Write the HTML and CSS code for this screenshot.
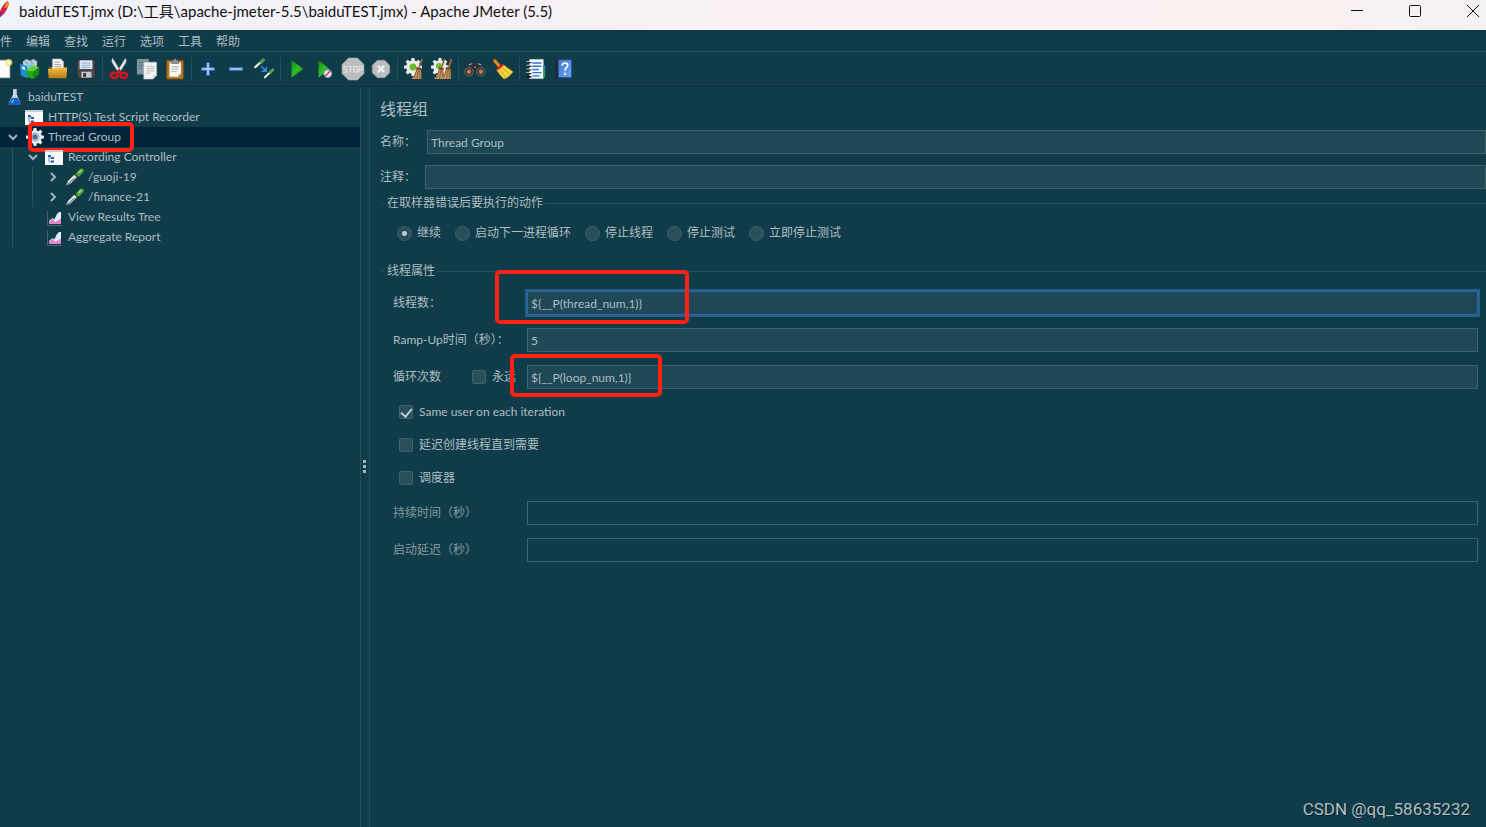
FILE: index.html
```html
<!DOCTYPE html>
<html lang="zh-CN">
<head>
<meta charset="utf-8">
<title>baiduTEST.jmx - Apache JMeter (5.5)</title>
<link rel="stylesheet" href="styles.css">
</head>
<body>
<svg class="defs" width="0" height="0" aria-hidden="true">
  <defs>
    <linearGradient id="g-green" x1="0" y1="0" x2="1" y2="1"><stop offset="0" stop-color="#0a8a0a"/><stop offset=".5" stop-color="#2fc02a"/><stop offset="1" stop-color="#087a08"/></linearGradient>
    <linearGradient id="g-gold" x1="0" y1="0" x2="0" y2="1"><stop offset="0" stop-color="#f4c04a"/><stop offset="1" stop-color="#b67b0c"/></linearGradient>
    <linearGradient id="g-book" x1="0" y1="0" x2="1" y2="1"><stop offset="0" stop-color="#3f78d0"/><stop offset="1" stop-color="#6ba5f0"/></linearGradient>
    <symbol id="gear" viewBox="0 0 20 20"><path fill="#e8ecee" d="M8.6 1h2.8l.4 2.6 1.5.6 2.1-1.5 2 2-1.5 2.1.6 1.5 2.5.4v2.7l-2.5.4-.6 1.5 1.5 2.1-2 2-2.1-1.5-1.5.6-.4 2.5H8.6l-.4-2.5-1.500-.6-2.100 1.500-2-2 1.500-2.100-.6-1.500L1 11.400V8.700l2.500-.4.6-1.500-1.500-2.100 2-2 2.100 1.500 1.500-.6z"/></symbol>
    <symbol id="pipette" viewBox="0 0 20 20"><path d="M1.500 18 3 14l7-7 2.500 2.500-7 7z" fill="#e6ecee" stroke="#7b898d" stroke-width=".6"/><path d="M3 17.200 9.500 11" stroke="#2a383e" stroke-width=".9"/><path d="m9 6 5 5" stroke="#173b1c" stroke-width="1.800"/><path d="m10.500 7 4-4.500q2-1.900 3.700-.4 1.500 1.700-.4 3.600L13.300 10z" fill="#4fa43c"/><path d="m13.500 6 3-3" stroke="#a5dd8d" stroke-width="1.300"/><path d="M4 19h10" stroke="#0b2c36" stroke-width="1"/></symbol>
    <symbol id="window" viewBox="0 0 20 20"><path fill="#f6f8fa" d="M0 3h18v15H0z"/><path fill="#c7ced6" d="M0 3h18v2H0z"/><path d="M4 9v6M4 11h4M4 15h4" stroke="#7b94b3" fill="none"/><path fill="#1f62b5" d="M3 8h3v2H3zM6 10h3v2H6zM6 13.500h3v2H6z"/></symbol>
    <symbol id="chart" viewBox="0 0 20 20"><path d="M2.500 4v14.500H17" stroke="#4c5d78" fill="none"/><path fill="#d9ecfa" d="m4 17 5-4 3-6 2-2h2v12z"/><path fill="#e485cf" d="M4 17v-2l3.500-3 3 2.500 5.500-3V17z"/><path d="m4 14.500 3.500-3 3 2.500 4-3 1-5" stroke="#f7fbff" fill="none"/></symbol>
    <symbol id="broom" viewBox="0 0 12 22"><path d="m10.500 1-3 9" stroke="#a06b3c" stroke-width="1.800"/><path d="M5 9l4.500 1 .5 11H0q4-4 5-12z" fill="#c79660"/><path d="m5.500 11-3 9M7 11l-1.500 10M8 11l.5 10" stroke="#835429" stroke-width=".8"/><path d="m4.800 10 5 1" stroke="#6c401b" stroke-width="1.400"/></symbol>
  </defs>
</svg>

<div class="app">
  <header class="titlebar">
    <svg class="feather" viewBox="0 0 10 20" aria-hidden="true"><path d="M7.500 1q2.500 2-.5 8T1 16L0 11Q3 4 7.500 1z" fill="#d2224a"/><path d="M7.500 1q2.500 2 0 6L4 8q1-4 3.500-7z" fill="#f08a24"/><path d="M1 12 0 17" stroke="#6d2a78" stroke-width="1.500"/></svg>
    <h1 class="window-title">baiduTEST.jmx (D:\工具\apache-jmeter-5.5\baiduTEST.jmx) - Apache JMeter (5.5)</h1>
    <div class="window-controls">
      <button type="button" aria-label="最小化"><svg viewBox="0 0 14 14"><path d="M1 6.500h12"/></svg></button>
      <button type="button" aria-label="最大化"><svg viewBox="0 0 14 14"><rect x="1.500" y="1.500" width="11" height="11" rx="1"/></svg></button>
      <button type="button" aria-label="关闭"><svg viewBox="0 0 14 14"><path d="m1 1 12 12M13 1 1 13"/></svg></button>
    </div>
  </header>

  <nav class="menubar">
    <button type="button">件</button><button type="button">编辑</button><button type="button">查找</button><button type="button">运行</button><button type="button">选项</button><button type="button">工具</button><button type="button">帮助</button>
  </nav>

  <div class="toolbar" role="toolbar">
    <button type="button" aria-label="新建"><svg viewBox="0 0 24 24"><path fill="#fafafa" stroke="#c9c9c9" d="M2.500 2.500h18v19h-18z"/><circle cx="19.500" cy="5" r="3.800" fill="#f3e768" opacity=".8"/><circle cx="19.500" cy="5" r="1.800" fill="#fffde0"/></svg></button>
    <button type="button" aria-label="模板"><svg viewBox="0 0 24 24"><path fill="#b9cdd6" d="m4 4 4-3 4 2 4-2 4 3-1 7H5z"/><path d="m7 3 2 4M13 3l2 4" stroke="#6f8c99"/><path fill="#1b8fd1" d="m1 6 8 3v13l-7-3z"/><path fill="#66c5ee" d="m9 9 5-3v8l-5 7z"/><path fill="#fff" d="m3.500 9 3 1v3l-3-1z"/><path fill="#24a51d" d="m8 13 8 2v8l-7-2z"/><path fill="#61d43c" d="m8 13 7-5 7 2-6 5z"/><path fill="#168a14" d="m16 15 6-5v8l-6 5z"/></svg></button>
    <button type="button" aria-label="打开"><svg viewBox="0 0 24 24"><path fill="#a06c10" d="M2 10h19v11H2z"/><path fill="#f3f3f3" stroke="#b5b5b5" stroke-width=".6" d="M6 1h9l3 3v8H6z"/><path d="M8 4.500h6M8 7h8M8 9.500h8" stroke="#9a9a9a"/><path fill="url(#g-gold)" d="M2 22 1 12h6l2-1.500h13L21 22z"/></svg></button>
    <button type="button" aria-label="保存"><svg viewBox="0 0 24 24"><path fill="#46484c" stroke="#25272b" d="M2 2h20v20H4.500L2 19.500z"/><path fill="#dce8f7" d="M5 2.500h14V12H5z"/><path d="M7 5.500h10M7 8h10M7 10.300h10" stroke="#89a9d1"/><path fill="#c4c6c9" d="M7 15h11v6.500H7z"/><path fill="#2a2c30" d="M9 16.500h3v4H9z"/></svg></button>
    <span class="separator"></span>
    <button type="button" aria-label="剪切"><svg viewBox="0 0 24 24"><path fill="#e6e8ea" stroke="#8d9396" stroke-width=".5" d="M5 0q-2 3 0 6l6.500 10 2-2zM19 0q2 3 0 6l-6.500 10-2-2z"/><g fill="none" stroke="#d4131c" stroke-width="2.800"><ellipse cx="6.800" cy="19" rx="3.600" ry="2.900"/><ellipse cx="17.200" cy="19" rx="3.600" ry="2.900"/></g><path d="m9.500 16.500 4-3.500M14.500 16.500l-3.500-3.500" stroke="#d4131c" stroke-width="2"/></svg></button>
    <button type="button" aria-label="复制"><svg viewBox="0 0 24 24"><path fill="#7f949c" d="M1 1h13v17H1z"/><path d="M3 5h8M3 8h6M3 11h4" stroke="#5b737c"/><path fill="#f4f5f5" stroke="#b1b8ba" stroke-width=".7" d="M8.500 4.500h14V19l-4 4h-10z"/><path d="M11 9h9M11 11.500h9M11 14h9M11 16.500h5" stroke="#b0b6b8"/><path fill="#c6cccd" d="M18.500 23v-4h4z"/></svg></button>
    <button type="button" aria-label="粘贴"><svg viewBox="0 0 24 24"><rect x="3" y="2.500" width="18" height="20.500" rx="1" fill="#b87a26" stroke="#7c4d10"/><path fill="#f7f7f7" d="M6 5h12.500v12l-3 3.500H6z"/><path fill="#c6c9ca" d="M15.500 20.500V17h3z"/><path d="M8 9.500h8M8 12h8M8 14.500h6" stroke="#a8adaf"/><path fill="#8f979a" stroke="#50585b" stroke-width=".6" d="M8 6V3h2l1-2h2l1 2h2v3z"/></svg></button>
    <span class="separator"></span>
    <button type="button" aria-label="全部展开"><svg viewBox="0 0 24 24"><path d="M12 4.500v15M4.500 12h15" stroke="#3878c4" stroke-width="4"/><path d="M12 5.500v13M5.500 12h13" stroke="#b9dbff" stroke-width="1.600"/></svg></button>
    <button type="button" aria-label="全部折叠"><svg viewBox="0 0 24 24"><path d="M4.500 12h15" stroke="#3878c4" stroke-width="4"/><path d="M5.500 12h13" stroke="#b9dbff" stroke-width="1.600"/></svg></button>
    <button type="button" aria-label="切换"><svg viewBox="0 0 24 24"><g stroke-linecap="round"><path d="m2.500 10 7-6.500M13 21l7-6.500" stroke="#e2eadf" stroke-width="2.400"/><path d="m9 4.500 2.500-2.500M19 15.500l2.500-2.500" stroke="#4fa642" stroke-width="3.200"/></g><path d="m9 9 5 5M14.500 9.500v5h-5" fill="none" stroke="#3b8ae6" stroke-width="1.600"/></svg></button>
    <span class="separator"></span>
    <button type="button" aria-label="启动"><svg viewBox="0 0 24 24"><path d="M6 2.500v19L19 12z" fill="url(#g-green)"/></svg></button>
    <button type="button" aria-label="不停顿开始"><svg viewBox="0 0 24 24"><path d="M5 2.500v19L17 12z" fill="url(#g-green)"/><circle cx="15" cy="17" r="4.300" fill="#e4edf6" stroke="#6f9bc7"/><path d="m12 20 6-6" stroke="#e03434" stroke-width="1.500"/></svg></button>
    <button type="button" class="wide-icon" aria-label="停止"><svg viewBox="0 0 24 24"><path fill="#bcbebf" stroke="#a2a5a6" stroke-width=".6" d="M7.500 1h9L23 7.500v9L16.500 23h-9L1 16.500v-9z"/><path d="M6.500 9.500H3v2.500h3v3H2.700M7.500 9.500h4M9.500 9.500V15.500M12.700 9.500h3.300V15h-3.300zM18 15.500v-6h3V13h-3" fill="none" stroke="#e4e5e5" stroke-width="1.100"/></svg></button>
    <button type="button" aria-label="关闭"><svg viewBox="0 0 24 24"><path fill="#bbbdbf" stroke="#9da1a3" stroke-width=".6" d="M8 2.500h8L21.500 8v8L16 21.500H8L2.500 16V8z"/><path d="m8.500 8.500 7 7m0-7-7 7" stroke="#f1f1f1" stroke-width="2.500"/></svg></button>
    <span class="separator"></span>
    <button type="button" class="wide-icon" aria-label="清除"><svg viewBox="0 0 24 24"><use href="#gear" x="1" y="0" width="20" height="20"/><circle cx="11" cy="10" r="3.500" fill="#72b92e"/><use href="#broom" x="9" y="1" width="13" height="22"/></svg></button>
    <button type="button" class="wide-icon" aria-label="清除全部"><svg viewBox="0 0 24 24"><use href="#gear" x="0" y="0" width="20" height="20"/><circle cx="9" cy="9" r="3" fill="#72b92e"/><use href="#broom" x="4" y="1" width="12" height="22"/><use href="#broom" x="11" y="1" width="12" height="22"/></svg></button>
    <span class="separator"></span>
    <button type="button" aria-label="查找"><svg viewBox="0 0 24 24"><path fill="#2b2d30" d="M1 14 5 6l4-2 3 3 3-3 4 2 4 8-3 6-5-3h-4l-5 3z"/><path d="m5 8 4-2M15 6l4 2M11 10h2" stroke="#a5a9ac" stroke-width="1.200"/><circle cx="5.500" cy="15" r="4.500" fill="#222428" stroke="#8d9295" stroke-width=".8"/><circle cx="18.500" cy="15" r="4.500" fill="#222428" stroke="#8d9295" stroke-width=".8"/><circle cx="5.500" cy="15" r="2.600" fill="#b77955"/><circle cx="18.500" cy="15" r="2.600" fill="#b77955"/></svg></button>
    <button type="button" aria-label="重置查找"><svg viewBox="0 0 24 24"><path d="m3 3 6 7" stroke="#b66a13" stroke-width="4" stroke-linecap="round"/><path d="m3 3 5 6" stroke="#efa638" stroke-width="1.600"/><path fill="#f2d341" stroke="#bd9511" stroke-width=".7" d="m5 13 7-6q5 4 11 8-4 6-10 8-5-5-8-10z"/><path d="m11 11 8 6M9 13l6 8" stroke="#c49c17" stroke-width=".8"/><path d="m5.500 12.500 7-5.500" stroke="#d31d18" stroke-width="2.500"/></svg></button>
    <span class="separator"></span>
    <button type="button" aria-label="函数助手"><svg viewBox="0 0 24 24"><path fill="#f8fafc" stroke="#c6cfd8" stroke-width=".5" d="M5 1.500h15v21H5z"/><path fill="#2c7ed4" d="M20 8h2v6h-2z"/><path fill="#38a538" d="M20 14h2v7h-2z"/><path d="M8 5.500h10M8 9h10M8 12.500h7M8 16h10M8 19.500h8" stroke="#2b76d8" stroke-width="1.500"/><path d="M2 5h5M2 9h5M2 13h5M2 17h5M2 20.500h5" stroke="#111" stroke-width="1.500"/><path d="M1.500 4h5M1.500 8h5M1.500 12h5M1.500 16h5" stroke="#fff" stroke-width=".8"/></svg></button>
    <button type="button" aria-label="帮助"><svg viewBox="0 0 24 24"><path fill="#17396f" d="M2 1h19v22H2z"/><path fill="#202b39" d="M2 1h4v22H2z"/><path fill="url(#g-book)" d="M6 2h14v19H6z"/><path d="M10 8.500q0-3 3-3t3 2.700q0 1.800-1.700 2.700-1.300.9-1.300 3.100M13 16v2.500" stroke="#fff" stroke-width="1.800" fill="none"/></svg></button>
  </div>

  <div class="workspace">
    <aside class="tree-pane">
      <ul class="tree" role="tree">
        <li role="treeitem">
          <div class="node root"><svg class="node-icon" viewBox="0 0 20 20"><path fill="#d9e6ef" d="M8 1h4v6l4 10q0 2-2 2H5q-2 0-2-2L8 7z" opacity=".85"/><path fill="#1260c4" d="m6.500 11h6.500l3 6.500q-.5 1.500-2 1.500H5q-1.500 0-2-1.500z"/><path d="m8.500 13-2 3.500" stroke="#7fc0ff" stroke-width="1.500"/><path d="M9 2v7" stroke="#fff"/></svg><span>baiduTEST</span></div>
        </li>
        <li role="treeitem">
          <div class="node level-1"><span class="toggle"></span><svg class="node-icon"><use href="#window"/></svg><span>HTTP(S) Test Script Recorder</span></div>
        </li>
        <li role="treeitem">
          <div class="node level-1 selected"><button type="button" class="toggle" aria-label="折叠"><svg viewBox="0 0 12 12"><path d="m2 4 4 4 4-4"/></svg></button><svg class="node-icon" viewBox="0 0 20 20"><use href="#gear"/><circle cx="10" cy="10" r="4.500" fill="#aab9cf"/><circle cx="10" cy="10" r="2.500" fill="#4d6f9f"/></svg><span>Thread Group</span><i class="mark mark-node"></i></div>
          <ul class="children guide-1">
            <li role="treeitem">
              <div class="node level-2"><button type="button" class="toggle" aria-label="折叠"><svg viewBox="0 0 12 12"><path d="m2 4 4 4 4-4"/></svg></button><svg class="node-icon"><use href="#window"/></svg><span>Recording Controller</span></div>
              <ul class="children guide-2">
                <li role="treeitem"><div class="node level-3"><button type="button" class="toggle" aria-label="展开"><svg viewBox="0 0 12 12"><path d="m4 2 4 4-4 4"/></svg></button><svg class="node-icon"><use href="#pipette"/></svg><span>/guoji-19</span></div></li>
                <li role="treeitem"><div class="node level-3"><button type="button" class="toggle" aria-label="展开"><svg viewBox="0 0 12 12"><path d="m4 2 4 4-4 4"/></svg></button><svg class="node-icon"><use href="#pipette"/></svg><span>/finance-21</span></div></li>
              </ul>
            </li>
            <li role="treeitem"><div class="node level-2"><span class="toggle"></span><svg class="node-icon"><use href="#chart"/></svg><span>View Results Tree</span></div></li>
            <li role="treeitem"><div class="node level-2"><span class="toggle"></span><svg class="node-icon"><use href="#chart"/></svg><span>Aggregate Report</span></div></li>
          </ul>
        </li>
      </ul>
    </aside>

    <div class="splitter" role="separator"><svg viewBox="0 0 4 14"><path fill="#a5b7bd" d="M0 1h3v3H0zM0 6h3v3H0zM0 11h3v3H0z"/></svg></div>

    <main class="editor">
      <h2 class="editor-title">线程组</h2>
      <div class="line"><label class="name-label" for="name">名称：</label><input id="name" type="text" value="Thread Group"></div>
      <div class="line"><label class="comment-label" for="comment">注释：</label><input id="comment" type="text"></div>

      <fieldset>
        <legend>在取样器错误后要执行的动作</legend>
        <div class="radios">
          <label><input type="radio" name="action" checked>继续</label>
          <label><input type="radio" name="action">启动下一进程循环</label>
          <label><input type="radio" name="action">停止线程</label>
          <label><input type="radio" name="action">停止测试</label>
          <label><input type="radio" name="action">立即停止测试</label>
        </div>
      </fieldset>

      <fieldset>
        <legend>线程属性</legend>
        <div class="props">
          <label for="threads">线程数：</label>
          <div class="field"><input id="threads" class="focused" type="text" value="${__P(thread_num,1)}"><i class="mark mark-threads"></i></div>
          <label for="ramp">Ramp-Up时间（秒）：</label>
          <div class="field"><input id="ramp" type="text" value="5"></div>
          <div class="loop"><label for="loops">循环次数</label><label class="check"><input type="checkbox">永远</label></div>
          <div class="field"><input id="loops" type="text" value="${__P(loop_num,1)}"><i class="mark mark-loops"></i></div>
          <label class="check option"><input type="checkbox" checked>Same user on each iteration</label>
          <label class="check option"><input type="checkbox">延迟创建线程直到需要</label>
          <label class="check option"><input type="checkbox">调度器</label>
          <label class="off" for="duration">持续时间（秒）</label>
          <div class="field"><input id="duration" type="text" disabled></div>
          <label class="off" for="delay">启动延迟（秒）</label>
          <div class="field"><input id="delay" type="text" disabled></div>
        </div>
      </fieldset>
    </main>
  </div>
  <div class="watermark">CSDN @qq_58635232</div>
</div>
</body>
</html>
```

FILE: styles.css
```css
:root {
  --bg: #103c4a;
  --field: #1e4856;
  --edge: #3b6169;
  --rule: #27505c;
  --text: #adbdc1;
  --muted: #849a9f;
  --mark: #ff2213;
}

* { box-sizing: border-box; }

body {
  margin: 0;
  background: var(--bg);
  color: var(--text);
  font: 12px/20px Lato, "Noto Sans CJK SC", sans-serif;
}

button, input { font: inherit; color: inherit; }
button { padding: 0; border: 0; background: none; }
ul { list-style: none; margin: 0; padding: 0; }
h1, h2 { margin: 0; font-weight: 400; }
.defs { position: absolute; }

.app {
  position: relative;
  display: flex;
  flex-direction: column;
  min-height: 100vh;
  overflow: hidden;
}

/* Title bar */
.titlebar {
  display: flex;
  height: 30px;
  background: linear-gradient(90deg, #f0f2f9, #f8f0f4 50%, #fbf0f0 85%, #f5f2f2);
  color: #111;
}
.feather { width: 10px; height: 20px; margin-right: 9px; }
.window-title { flex: 1; font-size: 15px; line-height: 22px; white-space: nowrap; }
.window-controls { display: flex; margin-right: -16px; }
.window-controls button { width: 58px; height: 22px; }
.window-controls svg { display: block; width: 14px; height: 14px; margin: 0 auto; fill: none; stroke: #111; stroke-width: 1; }

/* Menu and tool bars */
.menubar {
  display: flex;
  gap: 14px;
  height: 22px;
  border-bottom: 1px solid var(--rule);
}
.menubar button { line-height: 24px; }
.toolbar {
  display: flex;
  align-items: center;
  height: 35px;
  margin-left: -12px;
  border-bottom: 1px solid #0b303c;
}
.toolbar button { display: flex; justify-content: center; width: 28px; }
.toolbar svg { width: 22px; height: 22px; }
.toolbar .wide-icon svg { width: 24px; height: 24px; }
.separator { width: 1px; height: 24px; margin: 0 2px; background: var(--rule); }

/* Test plan tree */
.workspace { display: flex; flex: 1; }
.tree-pane { flex: 0 0 360px; }
.node { position: relative; display: flex; align-items: center; height: 20px; line-height: 22px; white-space: nowrap; }
.node.selected { background: #00243a; }
.root, .level-1 { padding-left: 5px; }
.level-2 { padding-left: 25px; }
.level-3 { padding-left: 45px; }
.node-icon { width: 20px; height: 20px; margin-right: 3px; }
.root .node-icon { height: 18px; }
.toggle { width: 20px; height: 20px; }
.toggle svg { display: block; width: 12px; height: 12px; margin-left: 2px; fill: none; stroke: #a4b4ba; stroke-width: 2; }
.children { position: relative; }
.children::before { content: ""; position: absolute; top: 0; bottom: 0; width: 1px; background: #2c525f; }
.guide-1::before { left: 12px; }
.guide-2::before { left: 32px; }

.splitter {
  flex: 0 0 10px;
  display: flex;
  align-items: center;
  justify-content: center;
  padding-top: 18px;
  border: solid var(--rule);
  border-width: 0 1px;
}
.splitter svg { width: 4px; height: 14px; }

/* Thread group editor */
.editor { flex: 1; min-width: 0; padding: 11px 0 0 10px; }
.editor-title { margin-bottom: 10px; font-size: 16px; line-height: 22px; }
.line { display: flex; align-items: center; margin-bottom: 11px; }
.name-label { width: 47px; }
.comment-label { width: 45px; }
.line input { flex: 1; min-width: 0; border-right: 0; }

input[type="text"] {
  height: 24px;
  padding: 0 3px;
  border: 1px solid var(--edge);
  border-radius: 0;
  background: var(--field);
  outline: 0;
}
input[type="text"]:disabled { background: transparent; }
input[type="text"].focused { border-color: #2a6a9c; box-shadow: 0 0 0 2px #235f8f; }

fieldset {
  min-width: 0;
  margin: -5px 0 25px 2px;
  padding: 12px 8px 0 3px;
  border: 0 solid var(--rule);
  border-top-width: 1px;
}
legend { padding: 0 2px; line-height: 16px; }

.radios { display: flex; gap: 14px; padding-left: 12px; }
.radios label, .check { display: flex; align-items: center; white-space: nowrap; }
input[type="radio"], input[type="checkbox"] {
  appearance: none;
  flex: none;
  margin: 0;
  border: 1px solid var(--edge);
  background: #2a4f5c;
}
input[type="radio"] { width: 15px; height: 15px; margin-right: 5px; border-radius: 50%; }
input[type="radio"]:checked { background: radial-gradient(circle, #c0cbce 2px, #2a4f5c 3px); }
input[type="checkbox"] { display: flex; align-items: flex-start; justify-content: center; width: 14px; height: 14px; margin-right: 6px; border-radius: 2px; }
input[type="checkbox"]:checked::after {
  content: "";
  width: 5px;
  height: 9px;
  border: solid #c0cbce;
  border-width: 0 2px 2px 0;
  transform: rotate(40deg);
}

.props {
  display: grid;
  grid-template-columns: 134px 1fr;
  align-items: center;
  row-gap: 13px;
  padding-left: 8px;
  white-space: nowrap;
}
.field { position: relative; display: flex; }
.field input { flex: 1; min-width: 0; }
.loop { display: flex; gap: 31px; }
.option { grid-column: 1 / -1; padding-left: 6px; }
.off { color: var(--muted); }

/* Highlight frames */
.mark { position: absolute; border: 4px solid var(--mark); border-radius: 5px; pointer-events: none; }
.mark-node { left: 28px; top: -5px; width: 106px; height: 30px; }
.mark-threads { left: -32px; top: -21px; width: 194px; height: 54px; }
.mark-loops { left: -17px; top: -11px; width: 152px; height: 43px; }

.watermark {
  position: absolute;
  right: 16px;
  bottom: 7px;
  color: #b3bec2;
  font: 17px/22px Roboto, sans-serif;
  text-shadow: 1px 1px 1px #06222b;
}
```
